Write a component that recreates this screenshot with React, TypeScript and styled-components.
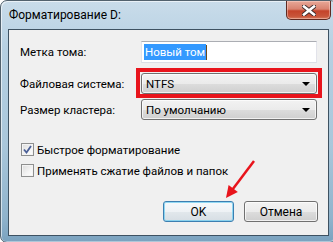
import styled, { createGlobalStyle } from 'styled-components';

const GlobalStyle = createGlobalStyle`
  html, body {
    margin: 0;
    padding: 0;
    background: #ffffff;
  }
  body {
    font-family: Roboto, "Liberation Sans", Arial, sans-serif;
    font-size: 11.5px;
    color: #000;
  }
`;

function CloseIcon() {
  return (
    <svg width="14" height="11" viewBox="0 0 14 11">
      <path
        d="M2 1.5 L12 9.5 M12 1.5 L2 9.5"
        stroke="#3b2a2a"
        strokeWidth="4.4"
        strokeLinecap="square"
      />
      <path
        d="M2 1.5 L12 9.5 M12 1.5 L2 9.5"
        stroke="#ffffff"
        strokeWidth="2.6"
        strokeLinecap="square"
      />
    </svg>
  );
}

function Arrow() {
  return (
    <ArrowSvg width="50" height="46" viewBox="0 0 50 46">
      <line x1="43" y1="5" x2="20" y2="35.5" stroke="#e8141c" strokeWidth="2.5" />
      <polygon points="15,42 26.8,36 17.6,29" fill="#e8141c" />
    </ArrowSvg>
  );
}

function Combo({ value }: { value: string }) {
  return (
    <ComboBox>
      <span>{value}</span>
      <ComboArrow />
    </ComboBox>
  );
}

export default function App() {
  return (
    <>
      <GlobalStyle />
      <Screen>
        <Window>
          <TitleBar>
            <Title>Форматирование D:</Title>
            <CloseButton>
              <CloseIcon />
            </CloseButton>
          </TitleBar>
          <Client>
            <Form>
              <Label>Метка тома:</Label>
              <TextBox>
                <Selected>Новый том</Selected>
                <Caret />
              </TextBox>

              <Label $top={10}>Файловая система:</Label>
              <Highlight $top={10}>
                <Combo value="NTFS" />
              </Highlight>

              <Label $top={5}>Размер кластера:</Label>
              <Spaced $top={5}>
                <Combo value="По умолчанию" />
              </Spaced>
            </Form>

            <Checks>
              <CheckRow>
                <CheckBox $checked>
                  <svg width="9" height="9" viewBox="0 0 9 9">
                    <path
                      d="M1 4.5 L3.5 7.5 L8 1"
                      stroke="#4a5f97"
                      strokeWidth="1.8"
                      fill="none"
                    />
                  </svg>
                </CheckBox>
                Быстрое форматирование
              </CheckRow>
              <CheckRow>
                <CheckBox />
                Применять сжатие файлов и папок
              </CheckRow>
            </Checks>

            <Buttons>
              <Button $primary $width={71}>OK</Button>
              <Button $width={74}>Отмена</Button>
            </Buttons>
            <Arrow />
          </Client>
        </Window>
      </Screen>
    </>
  );
}

const Screen = styled.div`
  width: 333px;
  height: 242px;
  overflow: hidden;
  background: #ffffff;
`;

const Window = styled.div`
  box-sizing: border-box;
  width: 337px;
  height: 243px;
  border: 1px solid #52626e;
  border-radius: 7px;
  padding: 0 7px 6px 7px;
  background: linear-gradient(
    to bottom,
    #c9dcea 0%,
    #b6d0e2 20%,
    #a9c7db 60%,
    #8fb3cc 90%,
    #7aa2bf 100%
  );
  box-shadow: inset 1px 1px 0 rgba(255, 255, 255, 0.6),
    inset -1px -1px 0 rgba(255, 255, 255, 0.4);
`;

const TitleBar = styled.div`
  height: 28px;
  display: flex;
  align-items: flex-start;
  justify-content: space-between;
`;

const Title = styled.div`
  margin-top: 7px;
  margin-left: 1px;
  font-size: 12px;
  color: #000;
`;

const CloseButton = styled.div`
  box-sizing: border-box;
  width: 45px;
  height: 19px;
  margin-right: -2px;
  display: flex;
  align-items: center;
  justify-content: center;
  border: 1px solid #5e2a22;
  border-top: none;
  border-radius: 0 0 5px 5px;
  background: linear-gradient(
    to bottom,
    #e8a898 0%,
    #d98370 45%,
    #c4432a 55%,
    #c8553a 85%,
    #d67b5e 100%
  );
  box-shadow: inset 0 0 0 1px rgba(255, 220, 210, 0.45);
`;

const Client = styled.div`
  position: relative;
  box-sizing: border-box;
  height: 207px;
  border: 1px solid #3e5262;
  background: #f0f0f0;
  padding: 11px 9px 0 11px;
  display: flex;
  flex-direction: column;
`;

const Form = styled.div`
  display: grid;
  grid-template-columns: 121px 176px;
  align-items: center;
`;

const Label = styled.div<{ $top?: number }>`
  margin-top: ${(p) => p.$top ?? 0}px;
  white-space: nowrap;
`;

const TextBox = styled.div`
  box-sizing: border-box;
  height: 22px;
  display: flex;
  align-items: center;
  padding-left: 2px;
  background: #ffffff;
  border: 1px solid #dbdfe6;
  border-top-color: #abadb3;
  border-left-color: #e2e3ea;
  border-right-color: #e2e3ea;
`;

const Selected = styled.span`
  background: #3399ff;
  color: #ffffff;
  line-height: 16px;
  padding: 0 1px;
`;

const Caret = styled.span`
  width: 1px;
  height: 15px;
  background: #6b4a1e;
`;

const Spaced = styled.div<{ $top?: number }>`
  margin-top: ${(p) => p.$top ?? 0}px;
`;

const Highlight = styled(Spaced)`
  position: relative;

  &::after {
    content: '';
    position: absolute;
    left: -5px;
    right: -5px;
    top: -5px;
    bottom: -4px;
    border: 4px solid #e8141c;
    box-sizing: border-box;
    pointer-events: none;
  }
`;

const ComboBox = styled.div`
  box-sizing: border-box;
  height: 21px;
  display: flex;
  align-items: center;
  justify-content: space-between;
  padding: 0 6px 0 4px;
  border: 1px solid #707070;
  border-radius: 3px;
  background: linear-gradient(
    to bottom,
    #f2f2f2 0%,
    #ebebeb 50%,
    #dddddd 51%,
    #cfcfcf 100%
  );
  box-shadow: inset 0 0 0 1px rgba(255, 255, 255, 0.7);
`;

const ComboArrow = styled.span`
  width: 0;
  height: 0;
  border-left: 4px solid transparent;
  border-right: 4px solid transparent;
  border-top: 4px solid #000;
`;

const Checks = styled.div`
  margin-top: 23px;
  display: flex;
  flex-direction: column;
  gap: 8px;
`;

const CheckRow = styled.div`
  display: flex;
  align-items: center;
  gap: 3px;
  height: 13px;
  white-space: nowrap;
`;

const CheckBox = styled.span<{ $checked?: boolean }>`
  box-sizing: border-box;
  width: 13px;
  height: 13px;
  margin-left: 1px;
  display: flex;
  align-items: center;
  justify-content: center;
  border: 1px solid #8e8f8f;
  background: linear-gradient(135deg, #dcdcdc 0%, #f4f4f4 60%, #ffffff 100%);
  box-shadow: inset 0 0 0 1px #f4f4f4;
`;

const Buttons = styled.div`
  margin-top: auto;
  margin-bottom: 13px;
  display: flex;
  justify-content: flex-end;
  gap: 10px;
  padding-right: 1px;
`;

const Button = styled.div<{ $primary?: boolean; $width: number }>`
  box-sizing: border-box;
  width: ${(p) => p.$width}px;
  height: 21px;
  display: flex;
  align-items: center;
  justify-content: center;
  font-size: 12px;
  border: 1px solid ${(p) => (p.$primary ? '#3c7fb1' : '#707070')};
  border-radius: 3px;
  background: ${(p) =>
    p.$primary
      ? 'linear-gradient(to bottom, #f6f9fb 0%, #eef2f5 50%, #e2e8ec 51%, #d6dee4 100%)'
      : 'linear-gradient(to bottom, #f2f2f2 0%, #ebebeb 50%, #dddddd 51%, #cfcfcf 100%)'};
  box-shadow: inset 0 0 0 1px
    ${(p) => (p.$primary ? 'rgba(112, 206, 240, 0.75)' : 'rgba(255, 255, 255, 0.7)')};
`;

const ArrowSvg = styled.svg`
  position: absolute;
  left: 202px;
  top: 126px;
  pointer-events: none;
`;
